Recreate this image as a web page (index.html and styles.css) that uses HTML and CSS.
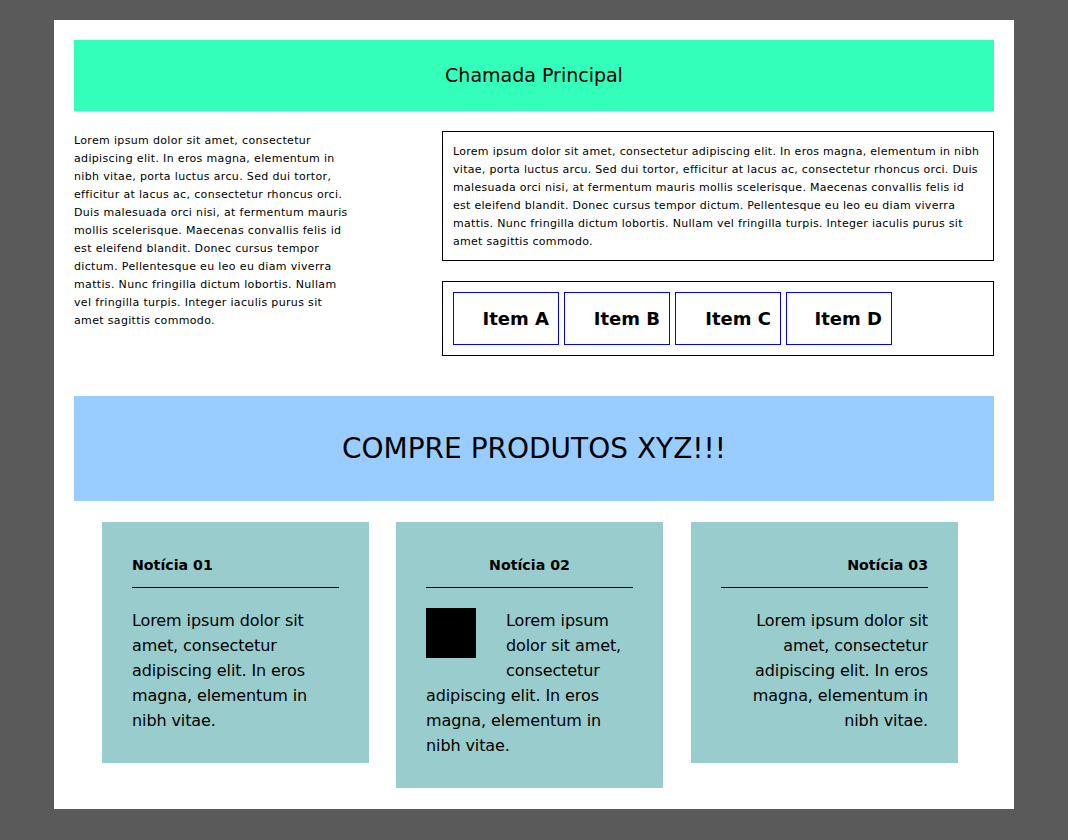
FILE: index.html
```html
<!DOCTYPE html>
<html lang="pt">
<head>
<meta charset="utf-8">
<title>Layout</title>
<link rel="stylesheet" href="styles.css">
</head>
<body>
<div class="page">
  <header class="topo"><h1>Chamada Principal</h1></header>
  <section class="linha">
    <div class="esquerda">
      <p>Lorem ipsum dolor sit amet, consectetur adipiscing elit. In eros magna, elementum in nibh vitae, porta luctus arcu. Sed dui tortor, efficitur at lacus ac, consectetur rhoncus orci. Duis malesuada orci nisi, at fermentum mauris mollis scelerisque. Maecenas convallis felis id est eleifend blandit. Donec cursus tempor dictum. Pellentesque eu leo eu diam viverra mattis. Nunc fringilla dictum lobortis. Nullam vel fringilla turpis. Integer iaculis purus sit amet sagittis commodo.</p>
    </div>
    <div class="direita">
      <div class="caixa-texto">
        <p>Lorem ipsum dolor sit amet, consectetur adipiscing elit. In eros magna, elementum in nibh vitae, porta luctus arcu. Sed dui tortor, efficitur at lacus ac, consectetur rhoncus orci. Duis malesuada orci nisi, at fermentum mauris mollis scelerisque. Maecenas convallis felis id est eleifend blandit. Donec cursus tempor dictum. Pellentesque eu leo eu diam viverra mattis. Nunc fringilla dictum lobortis. Nullam vel fringilla turpis. Integer iaculis purus sit amet sagittis commodo.</p>
      </div>
      <ul class="itens">
        <li>Item A</li>
        <li>Item B</li>
        <li>Item C</li>
        <li>Item D</li>
      </ul>
    </div>
  </section>
  <section class="banner"><h2>COMPRE PRODUTOS XYZ!!!</h2></section>
  <section class="noticias">
    <article class="card card-esq">
      <h3>Notícia 01</h3>
      <p>Lorem ipsum dolor sit amet, consectetur adipiscing elit. In eros magna, elementum in nibh vitae.</p>
    </article>
    <article class="card card-centro">
      <h3>Notícia 02</h3>
      <p><span class="quadrado"></span>Lorem ipsum dolor sit amet, consectetur adipiscing elit. In eros magna, elementum in nibh vitae.</p>
    </article>
    <article class="card card-dir">
      <h3>Notícia 03</h3>
      <p>Lorem ipsum dolor sit amet, consectetur adipiscing elit. In eros magna, elementum in nibh vitae.</p>
    </article>
  </section>
</div>
</body>
</html>
```
FILE: styles.css
```css
* { box-sizing: border-box; }
html, body { margin: 0; padding: 0; }
body {
  background: #5a5a5a;
  font-family: "DejaVu Sans", Verdana, sans-serif;
  color: #000;
  padding: 20px 54px 32px 54px;
}
.page {
  background: #fff;
  width: 960px;
  padding: 20px 20px 21px 20px;
}
.topo {
  background: #33ffbb;
  height: 71px;
  display: flex;
  align-items: center;
  justify-content: center;
}
.topo h1 {
  margin: 0;
  font-weight: normal;
  font-size: 19px;
  position: relative;
  top: -1px;
}
.linha {
  display: flex;
  justify-content: space-between;
  align-items: flex-start;
  margin-top: 20px;
}
.esquerda { width: 276px; }
.esquerda p, .caixa-texto p {
  margin: 0;
  font-size: 11px;
  line-height: 18px;
  letter-spacing: 0.34px;
}
.esquerda p { padding-top: 1px; }
.direita { width: 552px; }
.caixa-texto {
  border: 1px solid #000;
  padding: 10px;
}
.caixa-texto p {
  padding-top: 1px;
  margin-bottom: -1px;
  letter-spacing: 0.29px;
}
.itens {
  list-style: none;
  margin: 20px 0 0 0;
  border: 1px solid #000;
  padding: 10px;
  display: flex;
  gap: 5px;
}
.itens li {
  width: 106px;
  height: 53px;
  border: 1px solid #00f;
  display: flex;
  align-items: center;
  justify-content: flex-end;
  padding-right: 9px;
  font-weight: bold;
  font-size: 18px;
}
.banner {
  margin-top: 40px;
  background: #99ccff;
  height: 105px;
  display: flex;
  align-items: center;
  justify-content: center;
}
.banner h2 {
  margin: 0;
  font-weight: normal;
  font-size: 28px;
}
.noticias {
  margin-top: 21px;
  display: flex;
  align-items: flex-start;
  padding-left: 28px;
  gap: 27px;
}
.card {
  width: 267px;
  background: #99cccc;
  padding: 30px;
}
.card-dir { margin-left: 1px; }
.card h3 {
  margin: 0;
  font-size: 14.2px;
  line-height: 24px;
  padding-top: 1px;
  padding-bottom: 10px;
  border-bottom: 1px solid #000;
}
.card p {
  margin: 20px 0 0 0;
  font-size: 16px;
  line-height: 25px;
  letter-spacing: -0.1px;
}
.card-centro h3 { text-align: center; }
.card-dir { text-align: right; }
.quadrado {
  float: left;
  width: 50px;
  height: 50px;
  background: #000;
  margin: 0 30px 2px 0;
}
```
